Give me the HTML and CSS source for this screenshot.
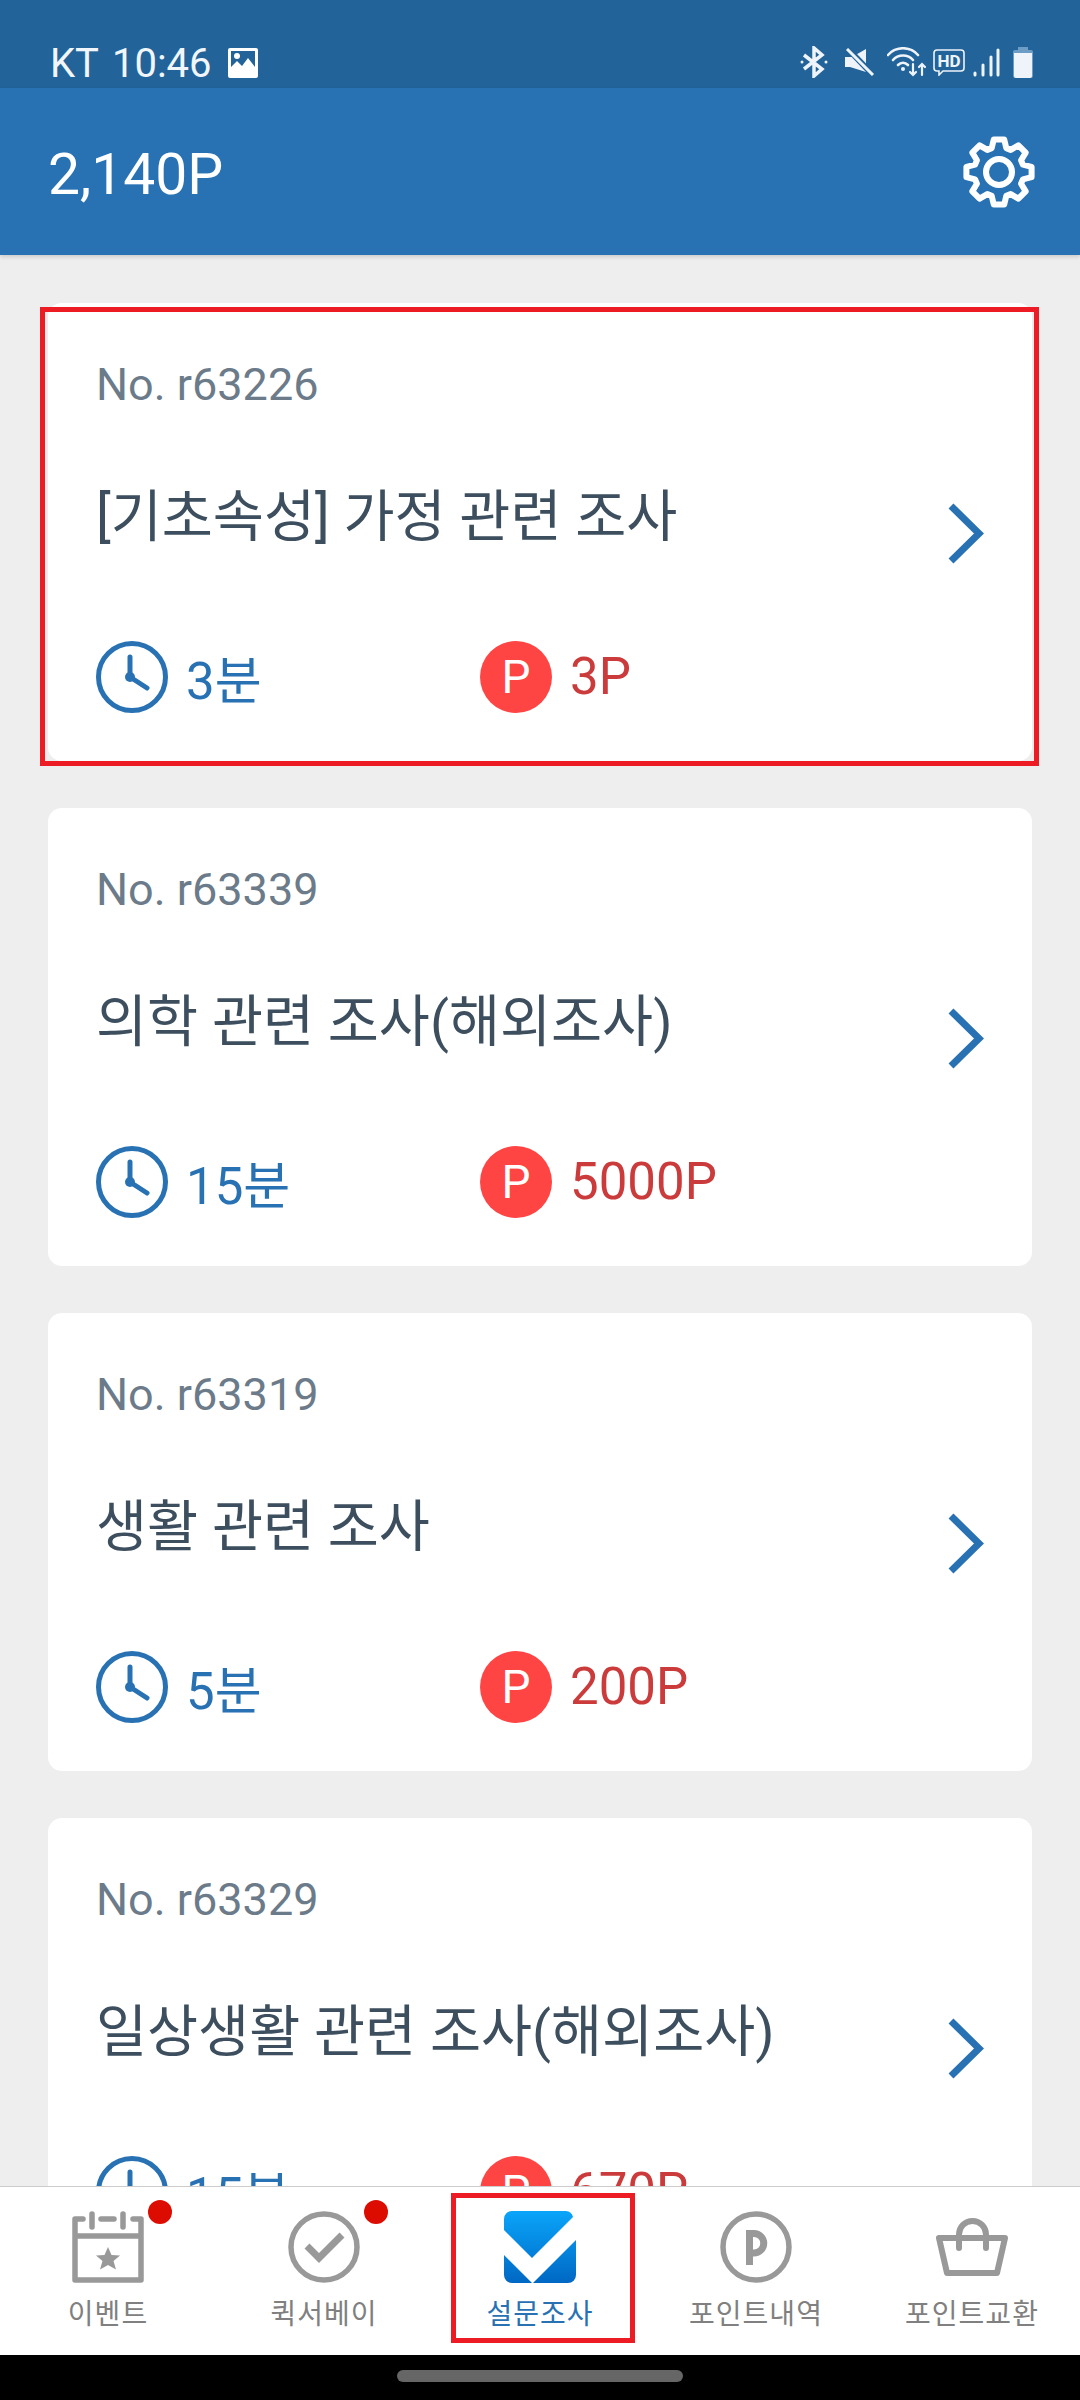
FILE: index.html
```html
<!DOCTYPE html>
<html lang="ko">

<head>
    <meta charset="UTF-8">
    <meta name="viewport" content="width=device-width, initial-scale=1.0">
    <title>설문조사</title>
    <link rel="stylesheet" href="styles.css">
</head>

<body>
    <div class="phone">
        <!-- Status bar -->
        <div class="status-bar">
            <div class="status-left">
                <span>KT</span>
                <span>10:46</span>
                <svg class="status-pic" viewBox="0 0 30 30">
                    <path fill="#fff" fill-rule="evenodd" d="M2 0H28a2 2 0 0 1 2 2V28a2 2 0 0 1-2 2H2a2 2 0 0 1-2-2V2a2 2 0 0 1 2-2ZM3 3V19L9 13L14 18L20 10L27 19V3Z" />
                    <circle cx="9" cy="8" r="3" fill="#fff" />
                </svg>
            </div>
            <div class="status-right">
                <svg class="ic-bt" viewBox="0 0 28 32" fill="none" stroke="#eef4fa" stroke-width="3.5">
                    <path d="M4 9L22 23L14 30V2L22 9L4 23" />
                    <circle cx="2" cy="16" r="1.5" fill="#eef4fa" stroke="none" />
                    <circle cx="26" cy="16" r="1.5" fill="#eef4fa" stroke="none" />
                </svg>
                <svg class="ic-mute" viewBox="0 0 30 28">
                    <path fill="#eef4fa" d="M0 9H7L21 1V24L5 19H0Z" />
                    <path d="M3 1L28 27" stroke="#22639a" stroke-width="6" />
                    <path d="M2 1L28 27" stroke="#eef4fa" stroke-width="3" />
                </svg>
                <svg class="ic-wifi" viewBox="0 0 40 30" fill="none" stroke="#eef4fa" stroke-width="2.6" stroke-linecap="round">
                    <path d="M1 8C9 -1 23 -1 31 8" />
                    <path d="M6 13C11 7 21 7 26 13" />
                    <path d="M11 18C14 15 18 15 21 18" />
                    <circle cx="16" cy="22" r="2" fill="#eef4fa" stroke="none" />
                    <path d="M26 17V28M23 25L26 28L29 25" stroke-width="2.2" />
                    <path d="M35 28V17M32 20L35 17L38 20" stroke-width="2.2" />
                </svg>
                <svg class="ic-hd" viewBox="0 0 32 27">
                    <path fill="none" stroke="#eef4fa" stroke-width="1.6" d="M4 1H28a3 3 0 0 1 3 3V19a3 3 0 0 1-3 3H10L6 26V22H4a3 3 0 0 1-3-3V4a3 3 0 0 1 3-3Z" />
                    <text x="16" y="17.5" class="hd-text" text-anchor="middle">HD</text>
                </svg>
                <svg class="ic-signal" viewBox="0 0 27 29" fill="none" stroke="#eef4fa" stroke-width="3" stroke-linecap="round">
                    <path d="M2 27V25M10 27V17M18 27V9M25 27V2" />
                </svg>
                <svg class="ic-battery" viewBox="0 0 20 31">
                    <rect x="5" y="0" width="10" height="5" fill="#6d9cc4" />
                    <path d="M2 3H18a2 2 0 0 1 2 2V29a2 2 0 0 1-2 2H2a2 2 0 0 1-2-2V5a2 2 0 0 1 2-2Z" fill="#6d9cc4" />
                    <path d="M1 6H19V29a2 2 0 0 1-2 2H3a2 2 0 0 1-2-2Z" fill="#eef4fa" />
                </svg>
            </div>
        </div>

        <!-- App bar -->
        <header class="app-bar">
            <span class="points">2,140P</span>
            <svg class="gear" viewBox="-37 -37 74 74" fill="none" stroke="#fff" stroke-width="6" stroke-linejoin="round">
                <path d="M-5.2-32.6L5.2-32.6L7.3-23.9L11.7-22.1L19.4-26.7L26.7-19.4L22.1-11.7L23.9-7.3L32.6-5.2L32.6 5.2L23.9 7.3L22.1 11.7L26.7 19.4L19.4 26.7L11.7 22.1L7.3 23.9L5.2 32.6L-5.2 32.6L-7.3 23.9L-11.7 22.1L-19.4 26.7L-26.7 19.4L-22.1 11.7L-23.9 7.3L-32.6 5.2L-32.6-5.2L-23.9-7.3L-22.1-11.7L-26.7-19.4L-19.4-26.7L-11.7-22.1L-7.3-23.9Z" />
                <circle r="13" />
            </svg>
        </header>

        <!-- Survey list -->
        <main class="list">
            <article class="card card-marked">
                <div class="card-body">
                    <div class="card-no">No. r63226</div>
                    <div class="card-title">[기초속성] 가정 관련 조사</div>
                    <div class="card-meta">
                        <div class="meta-item time">
                            <svg class="meta-icon" viewBox="0 0 72 72"><circle cx="36" cy="36" r="33.5" fill="none" stroke="#2872b4" stroke-width="5" /><path d="M34 16V36L51 47" fill="none" stroke="#2872b4" stroke-width="5" stroke-linecap="round" /><circle cx="34" cy="36" r="5" fill="#2872b4" /></svg>
                            <span>3분</span>
                        </div>
                        <div class="meta-item reward">
                            <span class="p-badge">P</span>
                            <span>3P</span>
                        </div>
                    </div>
                </div>
                <svg class="chevron" viewBox="0 0 36 61"><path d="M3 3L31 30.5L3 58" fill="none" stroke="#2872b4" stroke-width="7" /></svg>
            </article>

            <article class="card">
                <div class="card-body">
                    <div class="card-no">No. r63339</div>
                    <div class="card-title">의학 관련 조사(해외조사)</div>
                    <div class="card-meta">
                        <div class="meta-item time">
                            <svg class="meta-icon" viewBox="0 0 72 72"><circle cx="36" cy="36" r="33.5" fill="none" stroke="#2872b4" stroke-width="5" /><path d="M34 16V36L51 47" fill="none" stroke="#2872b4" stroke-width="5" stroke-linecap="round" /><circle cx="34" cy="36" r="5" fill="#2872b4" /></svg>
                            <span>15분</span>
                        </div>
                        <div class="meta-item reward">
                            <span class="p-badge">P</span>
                            <span>5000P</span>
                        </div>
                    </div>
                </div>
                <svg class="chevron" viewBox="0 0 36 61"><path d="M3 3L31 30.5L3 58" fill="none" stroke="#2872b4" stroke-width="7" /></svg>
            </article>

            <article class="card">
                <div class="card-body">
                    <div class="card-no">No. r63319</div>
                    <div class="card-title">생활 관련 조사</div>
                    <div class="card-meta">
                        <div class="meta-item time">
                            <svg class="meta-icon" viewBox="0 0 72 72"><circle cx="36" cy="36" r="33.5" fill="none" stroke="#2872b4" stroke-width="5" /><path d="M34 16V36L51 47" fill="none" stroke="#2872b4" stroke-width="5" stroke-linecap="round" /><circle cx="34" cy="36" r="5" fill="#2872b4" /></svg>
                            <span>5분</span>
                        </div>
                        <div class="meta-item reward">
                            <span class="p-badge">P</span>
                            <span>200P</span>
                        </div>
                    </div>
                </div>
                <svg class="chevron" viewBox="0 0 36 61"><path d="M3 3L31 30.5L3 58" fill="none" stroke="#2872b4" stroke-width="7" /></svg>
            </article>

            <article class="card">
                <div class="card-body">
                    <div class="card-no">No. r63329</div>
                    <div class="card-title">일상생활 관련 조사(해외조사)</div>
                    <div class="card-meta">
                        <div class="meta-item time">
                            <svg class="meta-icon" viewBox="0 0 72 72"><circle cx="36" cy="36" r="33.5" fill="none" stroke="#2872b4" stroke-width="5" /><path d="M34 16V36L51 47" fill="none" stroke="#2872b4" stroke-width="5" stroke-linecap="round" /><circle cx="34" cy="36" r="5" fill="#2872b4" /></svg>
                            <span>15분</span>
                        </div>
                        <div class="meta-item reward">
                            <span class="p-badge">P</span>
                            <span>670P</span>
                        </div>
                    </div>
                </div>
                <svg class="chevron" viewBox="0 0 36 61"><path d="M3 3L31 30.5L3 58" fill="none" stroke="#2872b4" stroke-width="7" /></svg>
            </article>
        </main>

        <!-- Bottom tabs -->
        <nav class="tabs">
            <div class="tab">
                <span class="tab-icon">
                    <svg viewBox="0 0 72 72" fill="none" stroke="#999" stroke-width="5.5" stroke-linejoin="round">
                        <path d="M11 8H3V69H69V8H61M3 25H69" stroke-linecap="round" />
                        <path d="M20 3V16M51 3V16M29 8H42" stroke-linecap="round" />
                        <path fill="#999" stroke="none" d="M36 36L39.5 44L48 44.5L41.5 50L44 58.5L36 54L28 58.5L30.5 50L24 44.5L32.5 44Z" />
                    </svg>
                    <i class="dot"></i>
                </span>
                <span class="tab-label">이벤트</span>
            </div>
            <div class="tab">
                <span class="tab-icon">
                    <svg viewBox="0 0 72 72" fill="none" stroke="#999" stroke-width="5.5">
                        <circle cx="36" cy="36" r="33" />
                        <path d="M19 35L31 47L54 24" stroke-width="7" />
                    </svg>
                    <i class="dot"></i>
                </span>
                <span class="tab-label">퀵서베이</span>
            </div>
            <div class="tab tab-active">
                <span class="tab-icon">
                    <svg viewBox="0 0 72 72">
                        <defs>
                            <linearGradient id="surveyGrad" x1="0" y1="0" x2="0" y2="1">
                                <stop offset="0" stop-color="#0aa5fa" />
                                <stop offset="1" stop-color="#0068c4" />
                            </linearGradient>
                        </defs>
                        <path fill="url(#surveyGrad)" d="M8 0H62A8 8 0 0 1 69 6L28 47L0 19V8A8 8 0 0 1 8 0ZM72 29V64A8 8 0 0 1 64 72H29ZM0 44L28 72H8A8 8 0 0 1 0 64Z" />
                    </svg>
                </span>
                <span class="tab-label">설문조사</span>
            </div>
            <div class="tab">
                <span class="tab-icon">
                    <svg viewBox="0 0 72 72" fill="none" stroke="#999" stroke-width="5.5">
                        <circle cx="36" cy="36" r="33" />
                        <path d="M29.5 54V22.5H34A9.75 9.75 0 0 1 34 42H29.5" stroke-width="7" />
                    </svg>
                </span>
                <span class="tab-label">포인트내역</span>
            </div>
            <div class="tab">
                <span class="tab-icon">
                    <svg viewBox="0 0 72 72" fill="none" stroke="#999" stroke-width="6" stroke-linejoin="round" stroke-linecap="round">
                        <path d="M3 27H69L61 62H11Z" />
                        <path d="M23 37V23.5A13.5 13.5 0 0 1 50 23.5V37" />
                    </svg>
                </span>
                <span class="tab-label">포인트교환</span>
            </div>
        </nav>

        <!-- Android navigation bar -->
        <div class="nav-bar"><span class="home-pill"></span></div>
    </div>
</body>

</html>
```

FILE: styles.css
```css
/* Set the style of the entire page */
* {
    box-sizing: border-box;
}

body {
    margin: 0;
    background-color: #eeeeee;
    font-family: Roboto, "Noto Sans CJK KR", sans-serif;
}

.phone {
    display: flex;
    flex-direction: column;
    width: 1080px;
    height: 2400px;
    overflow: hidden;
}

/* Status bar */
.status-bar {
    display: flex;
    flex: none;
    justify-content: space-between;
    align-items: center;
    height: 88px;
    padding: 38px 47px 0 50px;
    background-color: #22639a;
    color: #f1f6fb;
    font-size: 40px;
}

.status-left,
.status-right {
    display: flex;
    align-items: center;
}

.status-right {
    margin-top: -2px;
}

.status-left {
    gap: 13px;
}

.status-pic {
    width: 30px;
    height: 30px;
    margin-left: 3px;
}

.status-right svg {
    display: block;
}

.ic-bt {
    width: 28px;
    height: 32px;
    margin-right: 17px;
}

.ic-mute {
    width: 30px;
    height: 28px;
    margin-right: 12px;
}

.ic-wifi {
    width: 40px;
    height: 30px;
    margin-right: 6px;
}

.ic-hd {
    width: 32px;
    height: 27px;
    margin-right: 8px;
}

.hd-text {
    fill: #eef4fa;
    font-size: 17px;
    font-weight: 700;
}

.ic-signal {
    width: 27px;
    height: 29px;
    margin-right: 13px;
}

.ic-battery {
    width: 20px;
    height: 31px;
}

/* App bar */
.app-bar {
    display: flex;
    flex: none;
    justify-content: space-between;
    align-items: center;
    height: 167px;
    padding: 0 44px 0 48px;
    background-color: #2872b4;
    color: #ffffff;
    box-shadow: 0 2px 4px rgba(0, 0, 0, 0.15);
    position: relative;
}

.points {
    padding-top: 5px;
    font-size: 57px;
}

.gear {
    width: 74px;
    height: 74px;
}

/* Survey list */
.list {
    display: flex;
    flex: 1;
    flex-direction: column;
    gap: 47px;
    min-height: 0;
    padding: 48px 48px 0;
    overflow: hidden;
}

.card {
    display: flex;
    flex: none;
    align-items: center;
    justify-content: space-between;
    position: relative;
    height: 458px;
    padding: 56px 46px 48px 48px;
    border-radius: 14px;
    background-color: #ffffff;
}

/* Red marker drawn over the first card */
.card-marked::after {
    content: "";
    box-sizing: border-box;
    position: absolute;
    top: 4px;
    left: -8px;
    width: 999px;
    height: 459px;
    border: 5px solid #ed1c24;
}

.card-no {
    height: 50px;
    color: #6c7b8a;
    font-size: 45px;
    line-height: 50px;
}

.card-title {
    height: 60px;
    margin-top: 78px;
    color: #3d4f5f;
    font-size: 55.5px;
    line-height: 60px;
}

.card-meta {
    display: flex;
    margin-top: 93px;
    font-size: 51px;
}

.meta-item {
    display: flex;
    align-items: center;
    gap: 18px;
    height: 72px;
}

.time {
    width: 384px;
    color: #2872b4;
}

.reward {
    color: #cc3b3b;
}

.meta-icon {
    width: 72px;
    height: 72px;
}

.p-badge {
    display: flex;
    justify-content: center;
    align-items: center;
    width: 72px;
    height: 72px;
    border-radius: 50%;
    background-color: #ff4444;
    color: #ffffff;
    font-size: 46px;
}

.chevron {
    flex: none;
    width: 36px;
    height: 61px;
    margin: 0 2px 6px 0;
}

/* Bottom tabs */
.tabs {
    display: grid;
    flex: none;
    grid-template-columns: repeat(5, 1fr);
    position: relative;
    height: 169px;
    border-top: 1px solid #cccccc;
    background-color: #ffffff;
}

.tab {
    display: flex;
    flex-direction: column;
    align-items: center;
    padding-top: 24px;
    position: relative;
}

.tab-icon {
    position: relative;
    width: 72px;
    height: 72px;
}

.tab-icon svg {
    display: block;
    width: 72px;
    height: 72px;
}

.dot {
    position: absolute;
    top: -11px;
    right: -28px;
    width: 24px;
    height: 24px;
    border-radius: 50%;
    background-color: #dd0c00;
}

.tab-label {
    margin-top: 14px;
    color: #808080;
    font-size: 28px;
    line-height: 36px;
    letter-spacing: 1px;
}

.tab-active .tab-label {
    color: #2872b4;
}

/* Red marker over the active tab */
.tab-active::after {
    content: "";
    box-sizing: border-box;
    position: absolute;
    top: 6px;
    left: 19px;
    width: 184px;
    height: 150px;
    border: 5px solid #ed1c24;
}

/* Android navigation bar */
.nav-bar {
    display: flex;
    flex: none;
    justify-content: center;
    height: 45px;
    padding-top: 15px;
    background-color: #000000;
}

.home-pill {
    width: 286px;
    height: 12px;
    border-radius: 6px;
    background-color: #666666;
}
```
